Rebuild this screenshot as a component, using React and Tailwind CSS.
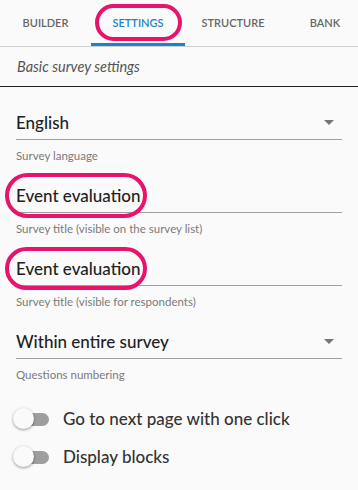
import React from "react";

const tabs = [
  { label: "BUILDER", w: "w-[91px]" },
  { label: "SETTINGS", w: "w-[94px]", active: true },
  { label: "STRUCTURE", w: "w-[96px]" },
  { label: "BANK", w: "w-[88px]" },
];

const Caret = () => (
  <svg width="10" height="5" viewBox="0 0 10 5" className="mr-[8px]">
    <path d="M0 0h10L5 5z" fill="#757575" />
  </svg>
);

const Field = ({ value, label, select }) => (
  <div>
    <div className="h-[34px] flex items-center justify-between border-b border-[#9e9e9e]">
      <span className="text-[17px] font-medium text-[#212121]">{value}</span>
      {select && <Caret />}
    </div>
    <div className="mt-[8px] text-[11.5px] leading-[16px] text-[#7a7a7a]">{label}</div>
  </div>
);

const Toggle = ({ label }) => (
  <div className="flex items-center h-[24px]">
    <div className="relative w-[36px] h-[24px] ml-[13px] flex items-center">
      <div className="ml-[4px] w-[34px] h-[13px] rounded-full bg-[#9e9e9e]" />
      <div className="absolute left-0 top-[1px] w-[21px] h-[21px] rounded-full bg-[#fafafa] shadow-[0_1px_3px_rgba(0,0,0,0.4)]" />
    </div>
    <span className="ml-[14px] text-[17px] font-medium text-[#333]">{label}</span>
  </div>
);

const Ring = ({ className }) => (
  <div className={`absolute border-[4px] border-[#e8146b] rounded-full pointer-events-none ${className}`} />
);

export default function App() {
  return (
    <div className="relative w-[358px] h-[490px] overflow-hidden bg-[#fafafa] font-['Lato',sans-serif]">
      <div className="flex h-[47px] border-b border-[#cfcfcf] bg-[#fafafa]">
        {tabs.map((t) => (
          <div
            key={t.label}
            className={`${t.w} shrink-0 flex items-center justify-center text-[11px] font-semibold ${
              t.active ? "text-[#1b84c6] border-b-[3px] border-[#1b84c6] pt-[3px]" : "text-[#666]"
            }`}
          >
            {t.label}
          </div>
        ))}
      </div>
      <div className="h-[40px] flex items-center px-[17px] italic text-[14.5px] text-[#555] border-b border-[#222]">
        Basic survey settings
      </div>
      <div className="px-[16px] pt-[19px] flex flex-col gap-[15px]">
        <Field value="English" label="Survey language" select />
        <Field value="Event evaluation" label="Survey title (visible on the survey list)" />
        <Field value="Event evaluation" label="Survey title (visible for respondents)" />
        <Field value="Within entire survey" label="Questions numbering" select />
      </div>
      <div className="mt-[24px] flex flex-col gap-[14px]">
        <Toggle label="Go to next page with one click" />
        <Toggle label="Display blocks" />
      </div>

      <Ring className="left-[95px] top-[4px] w-[87px] h-[37px]" />
      <Ring className="left-[5px] top-[173px] w-[142px] h-[45px]" />
      <Ring className="left-[5px] top-[247px] w-[142px] h-[43px]" />
    </div>
  );
}
